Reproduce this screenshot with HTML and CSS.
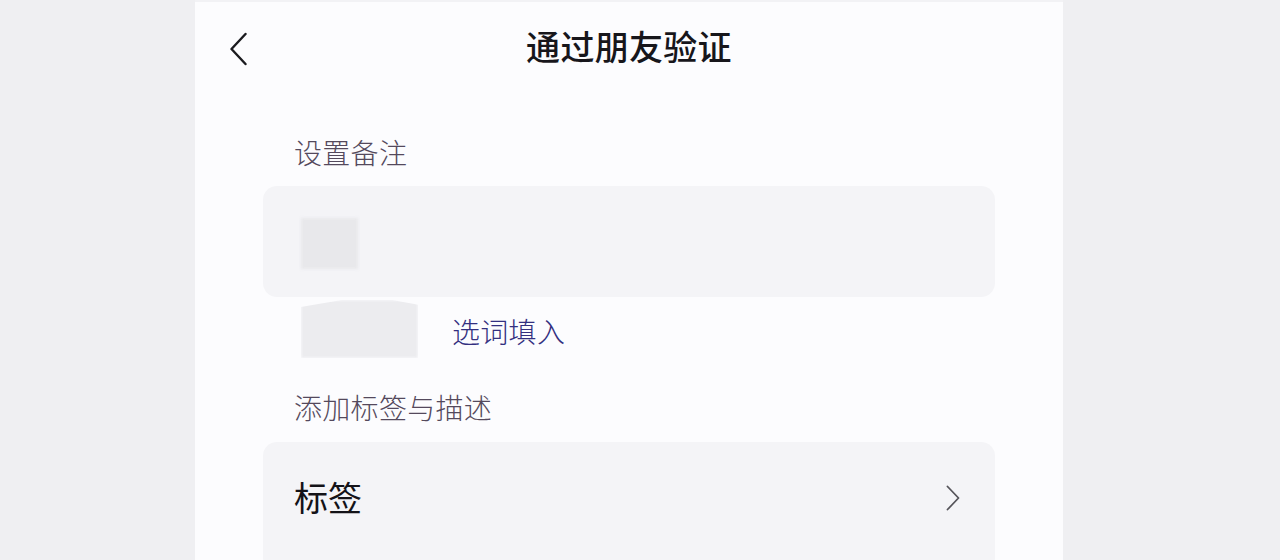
FILE: index.html
```html
<!DOCTYPE html>
<html lang="zh-CN">
<head>
<meta charset="utf-8">
<title>通过朋友验证</title>
<link rel="stylesheet" href="styles.css">
</head>
<body>
<div class="stage">
  <div class="phone">
    <header class="nav">
      <div class="nav-left">
        <svg class="back" width="18" height="34" viewBox="0 0 18 34" aria-hidden="true">
          <polyline points="15.5,2 1.5,17 15.5,32" fill="none" stroke="#1b1b1f" stroke-width="2.4" stroke-linecap="round" stroke-linejoin="round"/>
        </svg>
      </div>
      <h1 class="title">通过朋友验证</h1>
      <div class="nav-right"></div>
    </header>

    <main class="content">
      <div class="label label-first">设置备注</div>
      <div class="input-box">
        <div class="blur-block"></div>
      </div>
      <div class="suggest-row">
        <div class="blur-block2"></div>
        <span class="suggest">选词填入</span>
      </div>

      <div class="label label-second">添加标签与描述</div>
      <div class="card">
        <span class="card-title">标签</span>
        <svg class="chev" width="14" height="26" viewBox="0 0 14 26" aria-hidden="true">
          <polyline points="1.5,1.5 12.5,13 1.5,24.5" fill="none" stroke="#55545a" stroke-width="1.8" stroke-linecap="round" stroke-linejoin="round"/>
        </svg>
      </div>
    </main>
  </div>
</div>
</body>
</html>
```

FILE: styles.css
```css
* { box-sizing: border-box; }

html, body {
  margin: 0;
  padding: 0;
  height: 100%;
  overflow: hidden;
}

body {
  background: #efeff2;
  font-family: "Noto Sans CJK SC", "Noto Sans", sans-serif;
}

.stage {
  display: flex;
  padding-left: 195px;
  height: 560px;
}

.phone {
  width: 868px;
  height: 100%;
  background: #fcfcfe;
  border-top: 2px solid #f2f2f5;
}

.nav {
  display: grid;
  grid-template-columns: 120px 1fr 120px;
  align-items: center;
  height: 94px;
}

.nav-left {
  display: flex;
  align-items: center;
  padding-left: 35px;
}

.back { display: block; }

.title {
  margin: 0 0 6px 0;
  text-align: center;
  font-size: 34px;
  line-height: 34px;
  font-weight: 500;
  color: #17161b;
  letter-spacing: 0.3px;
}

.content {
  padding: 0 68px;
}

.label {
  font-size: 28px;
  line-height: 28px;
  font-weight: 300;
  color: #54495c;
  padding-left: 31px;
  letter-spacing: 0.3px;
}

.label-first { margin-top: 42px; }
.label-second { margin-top: 35px; }

.input-box {
  margin-top: 20px;
  height: 111px;
  background: #f4f4f7;
  border-radius: 14px;
  padding: 32px 0 0 38px;
}

.blur-block {
  width: 57px;
  height: 51px;
  background: #e8e8eb;
  filter: blur(1.5px);
}

.suggest-row {
  display: flex;
  align-items: flex-start;
  height: 61px;
  padding-left: 38px;
}

.blur-block2 {
  margin-top: 3px;
  width: 117px;
  height: 58px;
  background: #ececef;
  filter: blur(1.5px);
  clip-path: polygon(0 12%, 35% 0, 78% 0, 100% 8%, 100% 100%, 0 100%);
}

.suggest {
  margin-top: 20px;
  margin-left: 34px;
  font-size: 28px;
  line-height: 28px;
  font-weight: 300;
  color: #332f80;
  letter-spacing: 0.3px;
}

.card {
  margin-top: 21px;
  height: 130px;
  background: #f4f4f7;
  border-radius: 14px;
  display: flex;
  align-items: flex-start;
  justify-content: space-between;
  padding: 38px 35px 0 31px;
}

.card-title {
  font-size: 34px;
  line-height: 34px;
  color: #141318;
  font-weight: 400;
}

.chev {
  display: block;
  margin-top: 5px;
}
```
